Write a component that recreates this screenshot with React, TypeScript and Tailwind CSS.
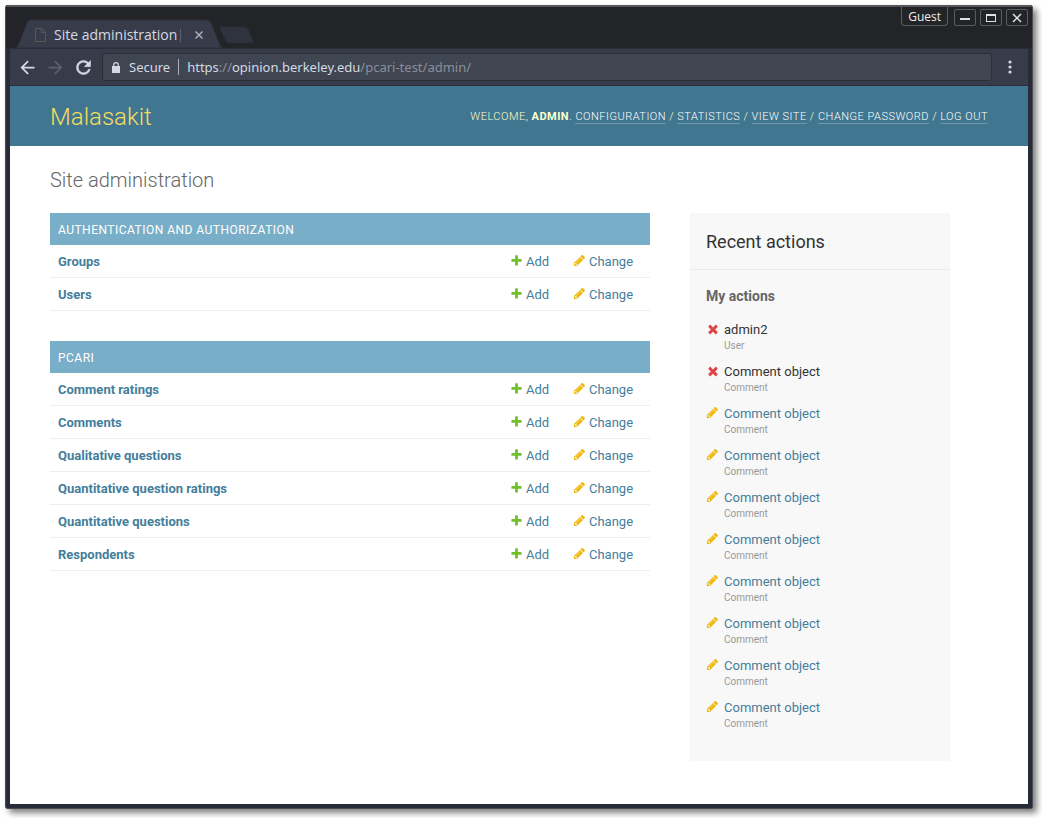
import React from "react";

type IconProps = { className?: string };

const PlusIcon = ({ className = "" }: IconProps) => (
  <svg viewBox="0 0 1792 1792" className={`size-[13px] shrink-0 fill-[#70bf2b] ${className}`} aria-hidden="true">
    <path d="M1600 796v192q0 40-28 68t-68 28h-416v416q0 40-28 68t-68 28h-192q-40 0-68-28t-28-68v-416h-416q-40 0-68-28t-28-68v-192q0-40 28-68t68-28h416v-416q0-40 28-68t68-28h192q40 0 68 28t28 68v416h416q40 0 68 28t28 68z" />
  </svg>
);

const PencilIcon = ({ className = "" }: IconProps) => (
  <svg viewBox="0 0 1792 1792" className={`size-[13px] shrink-0 fill-[#efb80b] ${className}`} aria-hidden="true">
    <path d="M491 1536l91-91-235-235-91 91v107h128v128h107zm523-928q0-22-22-22-10 0-17 7l-542 542q-7 7-7 17 0 22 22 22 10 0 17-7l542-542q7-7 7-17zm-54-192l416 416-832 832h-416v-416zm683 96q0 53-37 90l-166 166-416-416 166-165q36-38 90-38 53 0 91 38l235 234q37 39 37 91z" />
  </svg>
);

const DeleteIcon = ({ className = "" }: IconProps) => (
  <svg viewBox="0 0 1792 1792" className={`size-[14px] shrink-0 fill-[#dd4646] ${className}`} aria-hidden="true">
    <path d="M1490 1322q0 40-28 68l-136 136q-28 28-68 28t-68-28l-294-294-294 294q-28 28-68 28t-68-28l-136-136q-28-28-28-68t28-68l294-294-294-294q-28-28-28-68t28-68l136-136q28-28 68-28t68 28l294 294 294-294q28-28 68-28t68 28l136 136q28 28 28 68t-28 68l-294 294 294 294q28 28 28 68z" />
  </svg>
);

const windowButton =
  "flex h-[17px] w-[22px] items-center justify-center rounded-[2px] border border-[#5b5d61] bg-[#232428]";

function TitleBar() {
  return (
    <div className="flex h-[43px] items-end justify-between border-t-2 border-[#55585b] bg-[#232428] pl-[6px]">
      <div className="relative h-[29px] w-[244px]">
        <svg viewBox="0 0 244 29" className="absolute inset-0 size-full" aria-hidden="true">
          <path d="M4 29l2-3L15 4c1-2 2-3 4-3h176c2 0 3 1 4 3l9 22 2 3z" fill="#383c4a" stroke="#2b2e39" />
          <path d="M209 8h24c2 0 2 1 3 2l5 12c1 1 0 2-2 2h-22c-2 0-2-1-3-2l-6-12c-1-1 0-2 1-2z" fill="#2f3340" stroke="#2a2d38" />
          <path d="M23.500 9.500h6l4 4v9h-10zM29.500 9.500v4h4" fill="none" stroke="#57584f" />
        </svg>
        <div className="relative flex h-full items-center pt-[3px] pl-[42px] font-['Open_Sans',sans-serif] text-sm leading-5 text-[#d3dae3]">
          <span className="whitespace-nowrap">Site administration</span>
          <span className="ml-[3px] h-[13px] w-px bg-[#5c6070]" />
          <button aria-label="Close tab" className="ml-[14px]">
            <svg viewBox="0 0 8 8" className="size-2 stroke-[#a9afba]" aria-hidden="true">
              <path d="M.5.5l7 7m0-7l-7 7" strokeWidth="1.500" />
            </svg>
          </button>
        </div>
      </div>
      <div className="flex items-start gap-1 self-start pr-1">
        <button className="mr-[2px] h-[19px] rounded-b-[4px] border border-t-0 border-[#5b5d61] px-[6px] pt-px font-['Open_Sans',sans-serif] text-xs leading-[18px] text-[#eeeeec]">
          Guest
        </button>
        <button aria-label="Minimize" className={`mt-[2px] ${windowButton}`}>
          <svg viewBox="0 0 12 12" className="size-3" aria-hidden="true">
            <path d="M1 6h10v2H1z" fill="#dfe2df" />
          </svg>
        </button>
        <button aria-label="Maximize" className={`mt-[2px] ${windowButton}`}>
          <svg viewBox="0 0 12 12" className="size-3" aria-hidden="true">
            <path d="M1 2h10v8H1zM2 4v5h8V4z" fillRule="evenodd" fill="#dfe2df" />
          </svg>
        </button>
        <button aria-label="Close window" className={`mt-[2px] ${windowButton}`}>
          <svg viewBox="0 0 12 12" className="size-3" aria-hidden="true">
            <path d="M2 2l8 8m0-8l-8 8" stroke="#dfe2df" strokeWidth="1.500" />
          </svg>
        </button>
      </div>
    </div>
  );
}

function Toolbar() {
  return (
    <div className="flex h-[38px] items-center border-y border-[#2b2e39] bg-[#383c4a] pr-4 pl-[7px] text-[#d3dae3]">
      <button aria-label="Back">
        <svg viewBox="0 0 24 24" className="size-[21px] fill-current" aria-hidden="true">
          <path d="M20 11H7.830l5.590-5.590L12 4l-8 8 8 8 1.410-1.410L7.830 13H20v-2z" />
        </svg>
      </button>
      <button aria-label="Forward" className="ml-[7px] text-[#5b6070]">
        <svg viewBox="0 0 24 24" className="size-[21px] fill-current" aria-hidden="true">
          <path d="M12 4l-1.410 1.410L16.170 11H4v2h12.170l-5.580 5.590L12 20l8-8z" />
        </svg>
      </button>
      <button aria-label="Reload" className="ml-[7px]">
        <svg viewBox="0 0 24 24" className="size-[21px] fill-current" aria-hidden="true">
          <path d="M17.650 6.350A7.958 7.958 0 0 0 12 4c-4.420 0-7.990 3.580-7.990 8s3.570 8 7.990 8c3.730 0 6.840-2.550 7.730-6h-2.080A5.990 5.990 0 0 1 12 18c-3.310 0-6-2.690-6-6s2.690-6 6-6c1.660 0 3.140.690 4.220 1.780L13 11h7V4l-2.350 2.350z" stroke="currentColor" strokeWidth=".6" />
        </svg>
      </button>
      <div className="ml-2 flex h-7 flex-1 items-center rounded-[3px] border border-[#2b2e39] bg-[#404552] pl-[9px] text-[13px] leading-5">
        <svg viewBox="0 0 8 11" className="h-[11px] w-2 shrink-0" aria-hidden="true">
          <path d="M0 4h8v7H0z" fill="currentColor" />
          <path d="M1.700 5V3a2.300 2.300 0 0 1 4.600 0v2" fill="none" stroke="currentColor" strokeWidth="1.200" />
        </svg>
        <span className="ml-[9px]">Secure</span>
        <span className="mx-2 h-4 w-px bg-[#aab0bc]" />
        <span className="whitespace-nowrap text-[#8b909c]">
          <span className="text-[#d3dae3]">https</span>://<span className="text-[#d3dae3]">opinion.berkeley.edu</span>
          /pcari-test/admin/
        </span>
      </div>
      <button aria-label="Menu" className="ml-4">
        <svg viewBox="0 0 4 14" className="h-[14px] w-1 fill-current" aria-hidden="true">
          <circle cx="2" cy="2" r="1.600" />
          <circle cx="2" cy="7" r="1.600" />
          <circle cx="2" cy="12" r="1.600" />
        </svg>
      </button>
    </div>
  );
}

const userLinks = ["Configuration", "Statistics", "View site", "Change password", "Log out"];

function AdminHeader() {
  return (
    <header className="flex min-h-[60px] items-center justify-between bg-[#417690] px-10 pt-px text-[#ffffcc]">
      <a href="#home" className="text-2xl font-light text-[#f5dd5d]">
        Malasakit
      </a>
      <nav className="pt-px text-[11px] font-light tracking-[0.045em] uppercase">
        Welcome, <strong className="font-bold">admin</strong>.{" "}
        {userLinks.map((label, i) => (
          <React.Fragment key={label}>
            {i > 0 && " / "}
            <a href="#tools" className="border-b border-white/25 text-white">
              {label}
            </a>
          </React.Fragment>
        ))}
      </nav>
    </header>
  );
}

function AppModule({ name, models }: { name: string; models: string[] }) {
  return (
    <table className="mb-[30px] w-full border-collapse text-[13px] leading-4 text-[#447e9b]">
      <caption className="bg-[#79aec8] px-2 pt-[9px] pb-[7px] text-left text-xs leading-4 tracking-[0.04em] text-white uppercase">
        {name}
      </caption>
      <tbody>
        {models.map((model) => (
          <tr key={model} className="border-b border-[#eeeeee]">
            <th scope="row" className="px-2 pt-[9px] pb-[7px] text-left font-bold">
              <a href="#list">{model}</a>
            </th>
            <td className="w-[63px] pt-[9px] pb-[7px]">
              <a href="#add" className="flex items-start gap-[3px]">
                <PlusIcon />
                Add
              </a>
            </td>
            <td className="w-[77px] pt-[9px] pb-[7px]">
              <a href="#change" className="flex items-start gap-[3px]">
                <PencilIcon />
                Change
              </a>
            </td>
          </tr>
        ))}
      </tbody>
    </table>
  );
}

const actions = [
  { title: "admin2", kind: "User", deleted: true },
  { title: "Comment object", kind: "Comment", deleted: true },
  ...Array.from({ length: 8 }, () => ({ title: "Comment object", kind: "Comment", deleted: false })),
];

function RecentActions() {
  return (
    <aside className="w-[260px] shrink-0 bg-[#f8f8f8] pb-[19px] text-[#333333]">
      <h2 className="border-b border-[#eaeaea] px-4 pt-[19px] pb-[17px] text-lg leading-5">Recent actions</h2>
      <h3 className="mt-[18px] mb-[18px] px-4 text-sm leading-4 font-bold text-[#666666]">My actions</h3>
      <ul className="px-4">
        {actions.map(({ title, kind, deleted }, i) => (
          <li key={i} className="flex pb-[10px]">
            <span className="w-[18px] shrink-0">{deleted ? <DeleteIcon /> : <PencilIcon />}</span>
            <div>
              {deleted ? (
                <p className="text-[13px] leading-4">{title}</p>
              ) : (
                <a href="#object" className="block text-[13px] leading-4 text-[#447e9b]">
                  {title}
                </a>
              )}
              <p className="text-[10px] leading-4 text-[#999999]">{kind}</p>
            </div>
          </li>
        ))}
      </ul>
    </aside>
  );
}

export default function App() {
  return (
    <div className="flex min-h-screen flex-col bg-white pt-[5px] pr-[9px] pb-[9px] pl-[5px]">
      <div className="flex flex-1 flex-col overflow-hidden rounded-[3px] border-x border-b border-[#4a4d50] bg-[#262a36] font-['Noto_Sans',sans-serif] shadow-[4px_4px_6px_rgba(0,0,0,0.5)]">
        <TitleBar />
        <div className="flex flex-1 flex-col border-x-4 border-b-4 border-[#282c38]">
          <Toolbar />
          <div className="flex-1 bg-white font-[Roboto,sans-serif]">
            <AdminHeader />
            <div className="px-10 pt-[21px]">
              <h1 className="mb-[19px] text-xl leading-[27px] font-light text-[#666666]">Site administration</h1>
              <div className="flex items-start gap-10">
                <main className="max-w-[600px] flex-1">
                  <AppModule name="Authentication and Authorization" models={["Groups", "Users"]} />
                  <AppModule
                    name="Pcari"
                    models={[
                      "Comment ratings",
                      "Comments",
                      "Qualitative questions",
                      "Quantitative question ratings",
                      "Quantitative questions",
                      "Respondents",
                    ]}
                  />
                </main>
                <RecentActions />
              </div>
            </div>
          </div>
        </div>
      </div>
    </div>
  );
}
